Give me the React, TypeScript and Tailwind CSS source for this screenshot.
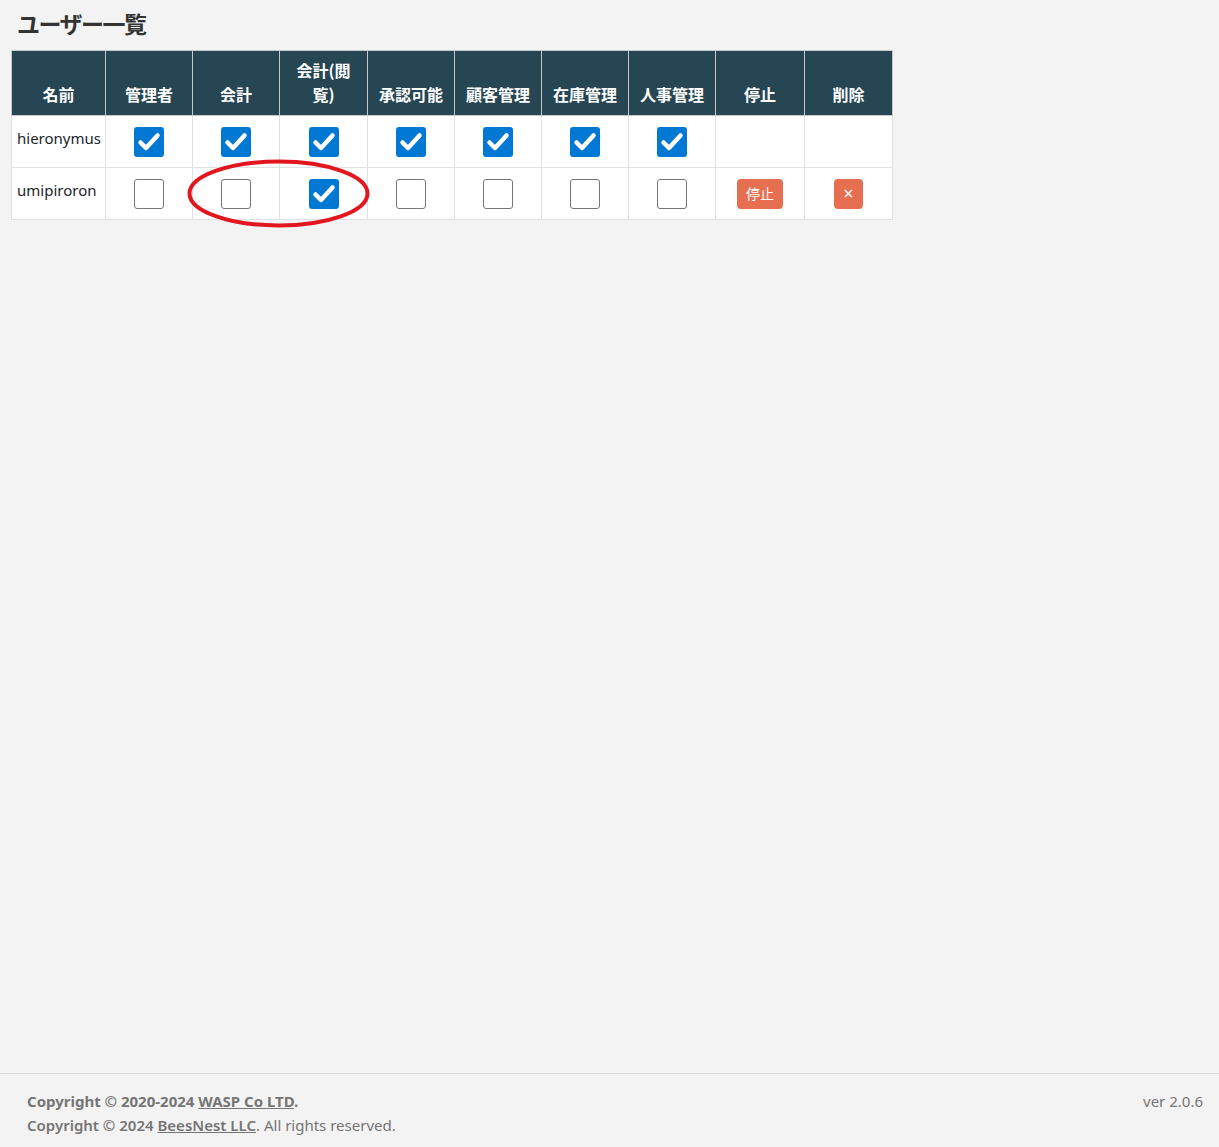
import React from "react";

type User = {
  name: string;
  perms: boolean[];
  actions: boolean;
};

const columns = [
  { label: "名前", w: "w-[94px]" },
  { label: "管理者", w: "w-[87px]" },
  { label: "会計", w: "w-[87px]" },
  { label: "会計(閲覧)", w: "w-[88px]" },
  { label: "承認可能", w: "w-[87px]" },
  { label: "顧客管理", w: "w-[87px]" },
  { label: "在庫管理", w: "w-[87px]" },
  { label: "人事管理", w: "w-[87px]" },
  { label: "停止", w: "w-[89px]" },
  { label: "削除", w: "w-[88px]" },
];

const users: User[] = [
  { name: "hieronymus", perms: [true, true, true, true, true, true, true], actions: false },
  { name: "umipiroron", perms: [false, false, true, false, false, false, false], actions: true },
];

function CheckBox({ checked }: { checked: boolean }) {
  if (checked) {
    return (
      <span className="inline-flex w-[30px] h-[30px] rounded-[3px] bg-[#0078d4] items-center justify-center align-middle">
        <svg width="30" height="30" viewBox="0 0 30 30">
          <path d="M6.5 15.5 L12 21 L23.5 8.5" fill="none" stroke="#fff" strokeWidth="4.5" strokeLinecap="round" strokeLinejoin="round" />
        </svg>
      </span>
    );
  }
  return <span className="inline-block w-[30px] h-[30px] rounded-[3px] bg-white border border-[#767676] align-middle" />;
}

export default function App() {
  return (
    <div
      className="min-h-screen flex flex-col bg-[#f3f3f3] text-[#212529]"
      style={{ fontFamily: '"Noto Sans", "Noto Sans CJK JP", sans-serif' }}
    >
      <main className="flex-1">
        <h1
          className="ml-[17px] mt-[5px] text-[23px] leading-[36px] font-bold text-[#333] tracking-[-1.5px]"
          style={{ fontFamily: '"Noto Sans CJK JP", sans-serif' }}
        >
          ユーザー一覧
        </h1>
        <div className="relative ml-[11px] mt-[9px] w-[882px]">
          <table className="border-collapse table-fixed w-[882px]">
            <thead>
              <tr className="bg-[#264653] h-[65px]">
                {columns.map((c) => (
                  <th
                    key={c.label}
                    className={`${c.w} border border-[#c8c8c8] align-bottom pb-[9px] px-[8px] text-white text-[16px] leading-[24px] font-bold text-center`}
                    style={{ fontFamily: '"Noto Sans CJK JP", sans-serif' }}
                  >
                    {c.label}
                  </th>
                ))}
              </tr>
            </thead>
            <tbody>
              {users.map((u) => (
                <tr key={u.name} className="bg-white h-[52px]">
                  <td className="border border-[#dee2e6] px-[5px] pb-[6px] text-[15px] text-[#212529]">{u.name}</td>
                  {u.perms.map((p, i) => (
                    <td key={i} className="border border-[#dee2e6] text-center">
                      <CheckBox checked={p} />
                    </td>
                  ))}
                  <td className="border border-[#dee2e6] text-center">
                    {u.actions && (
                      <button
                        className="inline-flex items-center justify-center w-[46px] h-[30px] rounded-[4px] bg-[#e76f51] text-white text-[14px]"
                        style={{ fontFamily: '"Noto Sans CJK JP", sans-serif' }}
                      >
                        停止
                      </button>
                    )}
                  </td>
                  <td className="border border-[#dee2e6] text-center">
                    {u.actions && (
                      <button className="inline-flex items-center justify-center w-[29px] h-[30px] rounded-[4px] bg-[#e76f51] text-white text-[18px]">
                        ×
                      </button>
                    )}
                  </td>
                </tr>
              ))}
            </tbody>
          </table>
          <svg className="absolute left-[175px] top-[108px] pointer-events-none" width="186" height="72" viewBox="0 0 186 72">
            <ellipse cx="92.5" cy="35.5" rx="89" ry="32" fill="none" stroke="#e3161f" strokeWidth="4" />
          </svg>
        </div>
      </main>
      <footer className="border-t border-[#dcdcdc] h-[74px] pt-[15px] pl-[27px] pr-[16px] flex justify-between text-[15px] leading-[24px] text-[#757575]">
        <div>
          <div className="font-bold">
            Copyright © 2020-2024 <a className="underline">WASP Co LTD</a>.
          </div>
          <div>
            <span className="font-semibold">
              Copyright © 2024 <a className="underline">BeesNest LLC</a>
            </span>
            . All rights reserved.
          </div>
        </div>
        <div>ver 2.0.6</div>
      </footer>
    </div>
  );
}
